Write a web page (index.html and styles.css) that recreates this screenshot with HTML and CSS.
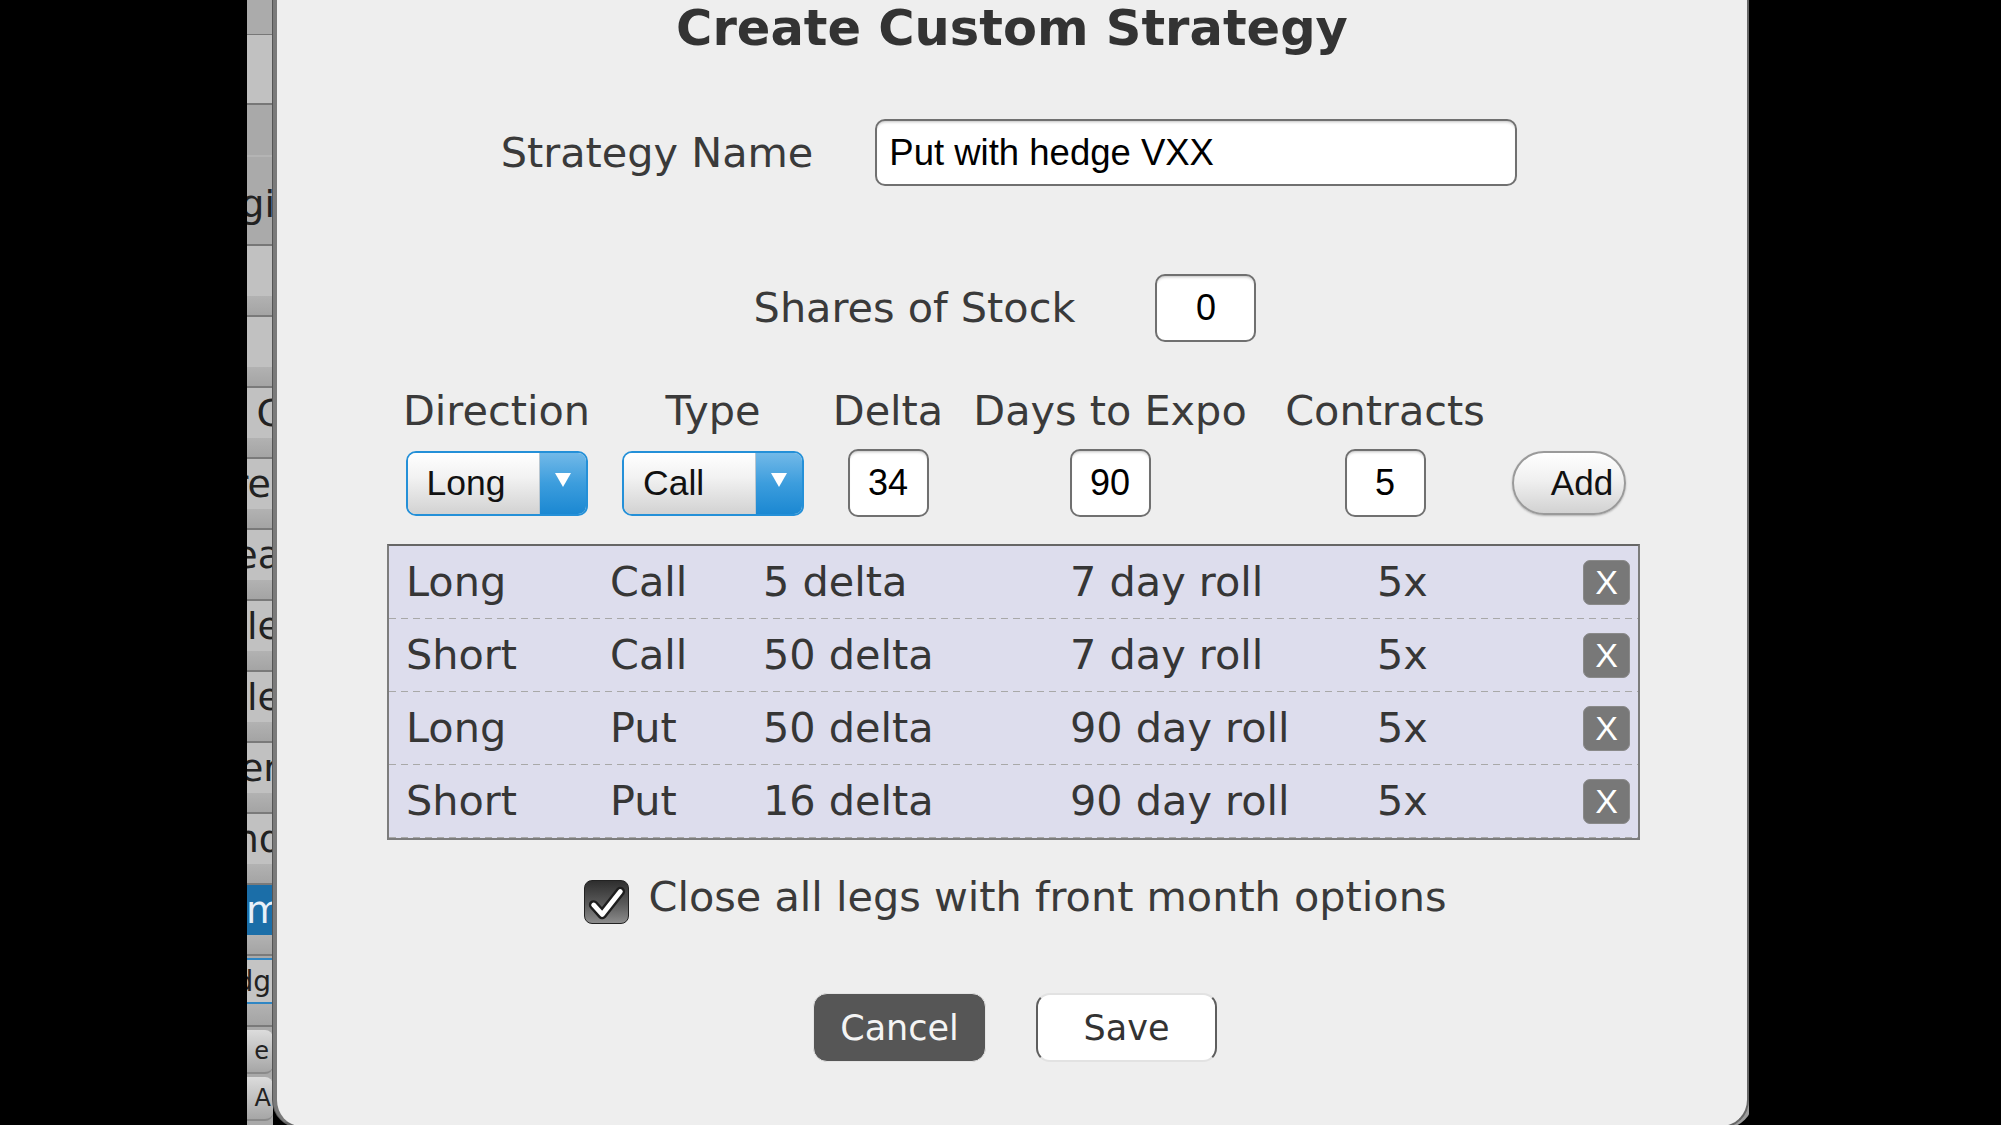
FILE: index.html
```html
<!DOCTYPE html>
<html lang="en">
<head>
<meta charset="utf-8">
<title>Create Custom Strategy</title>
<link rel="stylesheet" href="styles.css">
</head>
<body>
<div class="screen">
  <div class="letterbox-left"></div>
  <div class="app">
    <nav class="sidebar">
      <div class="sb-top"></div>
      <div class="sb-first"></div>
      <div class="sb-dark"><span class="sb-text clip2">Strategi</span></div>
      <div class="sb-unit"><div class="sb-light"></div><div class="sb-band"></div></div>
      <div class="sb-unit"><div class="sb-light"></div><div class="sb-band"></div></div>
      <div class="sb-unit"><div class="sb-light"><span class="sb-text clip10">Call C</span></div><div class="sb-band"></div></div>
      <div class="sb-unit"><div class="sb-light"><span class="sb-text clip0">Spre</span></div><div class="sb-band"></div></div>
      <div class="sb-unit"><div class="sb-light"><span class="sb-text clip8">Sprea</span></div><div class="sb-band"></div></div>
      <div class="sb-unit"><div class="sb-light"><span class="sb-text clip8">Straddle</span></div><div class="sb-band"></div></div>
      <div class="sb-unit"><div class="sb-light"><span class="sb-text clip8">Strangle</span></div><div class="sb-band"></div></div>
      <div class="sb-unit"><div class="sb-light"><span class="sb-text clip6">Conver</span></div><div class="sb-band"></div></div>
      <div class="sb-unit"><div class="sb-light"><span class="sb-text clip10">Cond</span></div><div class="sb-band"></div></div>
      <div class="sb-unit"><div class="sb-light sb-selected"><span class="sb-text clip10">Custom</span></div><div class="sb-band"></div></div>
      <div class="sb-unit"><div class="sb-light sb-outlined"><span class="sb-text sb-small clip0">Hedg</span></div><div class="sb-band"></div></div>
      <div class="sb-btn"><span class="sb-text sb-tiny clip4">e</span></div>
      <div class="sb-btn"><span class="sb-text sb-tiny clip0">A</span></div>
    </nav>

    <section class="dialog">
      <h1 class="title">Create Custom Strategy</h1>

      <div class="name-row">
        <span class="label">Strategy Name</span>
        <div class="field name-field">Put with hedge VXX</div>
      </div>

      <div class="shares-row">
        <span class="label">Shares of Stock</span>
        <div class="field num-field">0</div>
      </div>

      <div class="leg-form">
        <div class="label">Direction</div>
        <div class="label">Type</div>
        <div class="label">Delta</div>
        <div class="label">Days to Expo</div>
        <div class="label">Contracts</div>
        <div></div>

        <div class="select">
          <span class="select-value">Long</span>
          <span class="select-arrow"><svg width="16" height="14" viewBox="0 0 16 14"><polygon points="0,0 16,0 8,14" fill="#fff"/></svg></span>
        </div>
        <div class="select">
          <span class="select-value">Call</span>
          <span class="select-arrow"><svg width="16" height="14" viewBox="0 0 16 14"><polygon points="0,0 16,0 8,14" fill="#fff"/></svg></span>
        </div>
        <div class="field num-field small">34</div>
        <div class="field num-field small">90</div>
        <div class="field num-field small">5</div>
        <button class="add-btn">Add</button>
      </div>

      <div class="legs">
        <div class="leg"><span>Long</span><span>Call</span><span>5 delta</span><span>7 day roll</span><span>5x</span><button class="remove">X</button></div>
        <div class="leg"><span>Short</span><span>Call</span><span>50 delta</span><span>7 day roll</span><span>5x</span><button class="remove">X</button></div>
        <div class="leg"><span>Long</span><span>Put</span><span>50 delta</span><span>90 day roll</span><span>5x</span><button class="remove">X</button></div>
        <div class="leg"><span>Short</span><span>Put</span><span>16 delta</span><span>90 day roll</span><span>5x</span><button class="remove">X</button></div>
      </div>

      <div class="check-row">
        <span class="checkbox">
          <svg width="45" height="44" viewBox="0 0 45 44">
            <polyline points="9,24 18,34 37,10" fill="none" stroke="#1e1e1e" stroke-width="10" stroke-linejoin="round" stroke-linecap="round"/>
            <polyline points="9,24 18,34 37,10" fill="none" stroke="#fff" stroke-width="5" stroke-linejoin="round" stroke-linecap="round"/>
          </svg>
        </span>
        <span class="label check-label">Close all legs with front month options</span>
      </div>

      <div class="actions">
        <button class="btn-cancel">Cancel</button>
        <button class="btn-save">Save</button>
      </div>
    </section>
  </div>
  <div class="letterbox-right"></div>
</div>
</body>
</html>
```

FILE: styles.css
```css
html, body {
  margin: 0;
  padding: 0;
  height: 1125px;
  background: #000;
  overflow: hidden;
}

.screen {
  display: flex;
  height: 1125px;
}

.letterbox-left {
  width: 247px;
  flex: none;
  background: #000;
}

.letterbox-right {
  flex: 1;
  background: #000;
}

.app {
  display: flex;
  flex: none;
  width: 1502px;
  height: 1125px;
}

/* ---------- sidebar strip ---------- */
.sidebar {
  width: 26px;
  flex: none;
  display: flex;
  flex-direction: column;
  overflow: hidden;
  background: #a9a9a9;
  font-family: "DejaVu Sans", sans-serif;
}

.sb-top {
  height: 34px;
  flex: none;
  background: #ababab;
  border-bottom: 1px solid #777;
}

.sb-first {
  height: 68px;
  flex: none;
  background: #c1c1c1;
  border-bottom: 2px solid #777;
}

.sb-dark {
  height: 141px;
  flex: none;
  background: linear-gradient(#a9a9a9 0 50px, #b4b4b4 50px 52px, #aaaaaa 52px);
  border-bottom: 2px solid #777;
  display: flex;
  justify-content: flex-end;
  align-items: flex-end;
  padding-bottom: 18px;
  box-sizing: border-box;
  overflow: hidden;
}

.sb-unit {
  height: 71px;
  flex: none;
  display: flex;
  flex-direction: column;
  border-bottom: 2px solid #7a7a7a;
  box-sizing: border-box;
}

.sb-light {
  height: 50px;
  flex: none;
  background: #c1c1c1;
  display: flex;
  justify-content: flex-end;
  align-items: center;
  overflow: hidden;
}

.sb-band {
  flex: 1;
  background: linear-gradient(#b2b2b2, #a4a4a4);
}

.sb-selected {
  background: #1b6ea8;
  color: #fff;
}

.sb-selected .sb-text {
  color: #e8f0f8;
}

.sb-outlined {
  background: #c4c4c4;
  border-top: 2px solid #2f86c4;
  border-bottom: 2px solid #2f86c4;
  box-sizing: border-box;
  height: 46px;
  margin-top: 2px;
}

.sb-btn {
  height: 42px;
  flex: none;
  margin: 3px 0 0 0;
  border-radius: 0 8px 8px 0;
  background: linear-gradient(#dcdcdc, #a6a6a6);
  border-bottom: 2px solid #8a8a8a;
  display: flex;
  justify-content: flex-end;
  align-items: center;
  overflow: hidden;
}

.sb-text {
  flex: none;
  white-space: nowrap;
  font-size: 38px;
  color: #222;
}

.sb-small {
  font-size: 28px;
}

.sb-tiny {
  font-size: 24px;
}

.clip0 { margin-right: 2px; }
.clip2 { margin-right: -2px; }
.clip4 { margin-right: 4px; }
.clip6 { margin-right: -6px; }
.clip8 { margin-right: -8px; }
.clip10 { margin-right: -10px; }

/* ---------- dialog ---------- */
.dialog {
  flex: none;
  width: 1476px;
  height: 1128px;
  box-sizing: border-box;
  background: #eeeeee;
  border-left: 4px solid #7a7a7a;
  border-right: 2px solid #666;
  border-bottom: 2px solid #666;
  border-radius: 0 0 28px 28px;
  box-shadow: -1px 0 0 #555, 4px 0 0 #9c9c9c;
  display: flex;
  flex-direction: column;
  align-items: center;
  font-family: "DejaVu Sans", sans-serif;
  color: #363636;
}

.title {
  margin: 0;
  height: 56px;
  line-height: 57px;
  font-size: 49.5px;
  font-weight: bold;
  color: #333;
}

.label {
  font-size: 41.4px;
  color: #3a3a3a;
  white-space: nowrap;
}

.field {
  box-sizing: border-box;
  background: #fff;
  border: 2px solid #707070;
  border-radius: 10px;
  box-shadow: inset 0 3px 3px -2px rgba(0, 0, 0, 0.25);
  font-family: "Liberation Sans", Arial, sans-serif;
  color: #000;
  display: flex;
  align-items: center;
}

.name-row {
  margin-top: 63px;
  height: 67px;
  display: flex;
  align-items: center;
  gap: 62px;
  margin-right: 6px;
}

.name-field {
  width: 642px;
  height: 67px;
  padding-left: 12px;
  font-size: 36.5px;
}

.shares-row {
  margin-top: 88px;
  height: 68px;
  display: flex;
  align-items: center;
  gap: 80px;
  margin-right: 14px;
}

.num-field {
  width: 101px;
  height: 68px;
  justify-content: center;
  font-size: 36px;
}

.num-field.small {
  width: 81px;
}

/* ---------- leg form ---------- */
.leg-form {
  align-self: flex-start;
  margin-top: 44px;
  margin-left: 111px;
  display: grid;
  grid-template-columns: 217px 216px 134px 310px 240px 128px;
  grid-template-rows: 50px 66px;
  row-gap: 14px;
  justify-items: center;
  align-items: center;
}

.select {
  box-sizing: border-box;
  width: 182px;
  height: 65px;
  border: 2px solid #2490d8;
  border-radius: 10px;
  overflow: hidden;
  display: flex;
}

.select-value {
  flex: 1;
  display: flex;
  align-items: center;
  padding-left: 19px;
  background: linear-gradient(#ffffff, #f2f2f2 40%, #d2d2d2);
  border-right: 1px solid #b9c6d0;
  font-family: "Liberation Sans", Arial, sans-serif;
  font-size: 35.5px;
  color: #111;
}

.select-arrow {
  width: 46px;
  flex: none;
  display: flex;
  justify-content: center;
  align-items: center;
  padding-bottom: 6px;
  box-sizing: border-box;
  background: linear-gradient(#72b9e8, #3c9ddd 50%, #1b88d2);
}

.add-btn {
  box-sizing: border-box;
  width: 114px;
  height: 64px;
  border: 2px solid #9a9a9a;
  border-radius: 32px;
  background: linear-gradient(#ffffff, #f0f0f0 45%, #d2d2d2);
  box-shadow: 0 1px 2px rgba(0, 0, 0, 0.25);
  font-family: "Liberation Sans", Arial, sans-serif;
  font-size: 35px;
  color: #111;
  padding: 0 0 0 26px;
  text-align: center;
}

/* ---------- legs table ---------- */
.legs {
  margin-top: 28px;
  margin-left: 3px;
  width: 1253px;
  height: 296px;
  box-sizing: border-box;
  background: #dddded;
  border: 2px solid #7c7c7c;
  border-top-color: #666;
  display: flex;
  flex-direction: column;
}

.leg {
  height: 73px;
  flex: none;
  box-sizing: border-box;
  display: grid;
  grid-template-columns: 204px 153px 307px 307px 1fr 47px;
  align-items: center;
  padding: 0 8px 1px 17px;
  font-size: 41.4px;
  color: #363636;
  background-image: linear-gradient(to right, #a8a8a8 0 7px, transparent 7px 12px);
  background-size: 12px 1px;
  background-repeat: repeat-x;
  background-position: 0 100%;
  white-space: nowrap;
}

.remove {
  box-sizing: border-box;
  width: 47px;
  height: 45px;
  padding: 0;
  border: 1px solid #8a8a8a;
  border-radius: 7px;
  background: #787878;
  color: #fff;
  font-family: "Liberation Sans", Arial, sans-serif;
  font-size: 34px;
  line-height: 43px;
  text-align: center;
}

/* ---------- checkbox ---------- */
.check-row {
  margin-top: 39px;
  margin-left: 6px;
  height: 45px;
  display: flex;
  align-items: center;
  gap: 20px;
}

.checkbox {
  box-sizing: border-box;
  width: 45px;
  height: 44px;
  border: 1px solid #222;
  border-radius: 8px;
  background: linear-gradient(#2e2e2e, #5a5a5a 55%, #8c8c8c);
  display: flex;
}

.check-label {
  margin-bottom: 10px;
}

/* ---------- action buttons ---------- */
.actions {
  margin-top: 69px;
  height: 69px;
  display: flex;
  gap: 50px;
  margin-left: 6px;
}

.btn-cancel,
.btn-save {
  box-sizing: border-box;
  height: 69px;
  border-radius: 14px;
  font-family: "DejaVu Sans", sans-serif;
  font-size: 35px;
  padding: 0;
}

.btn-cancel {
  width: 173px;
  background: #565656;
  color: #f4f4f4;
  border: 1px solid #e4e4e4;
}

.btn-save {
  width: 181px;
  background: #fff;
  color: #333;
  border: 2px solid #e2e2e2;
  border-left-color: #5e5e5e;
  border-right-color: #5e5e5e;
}
```
